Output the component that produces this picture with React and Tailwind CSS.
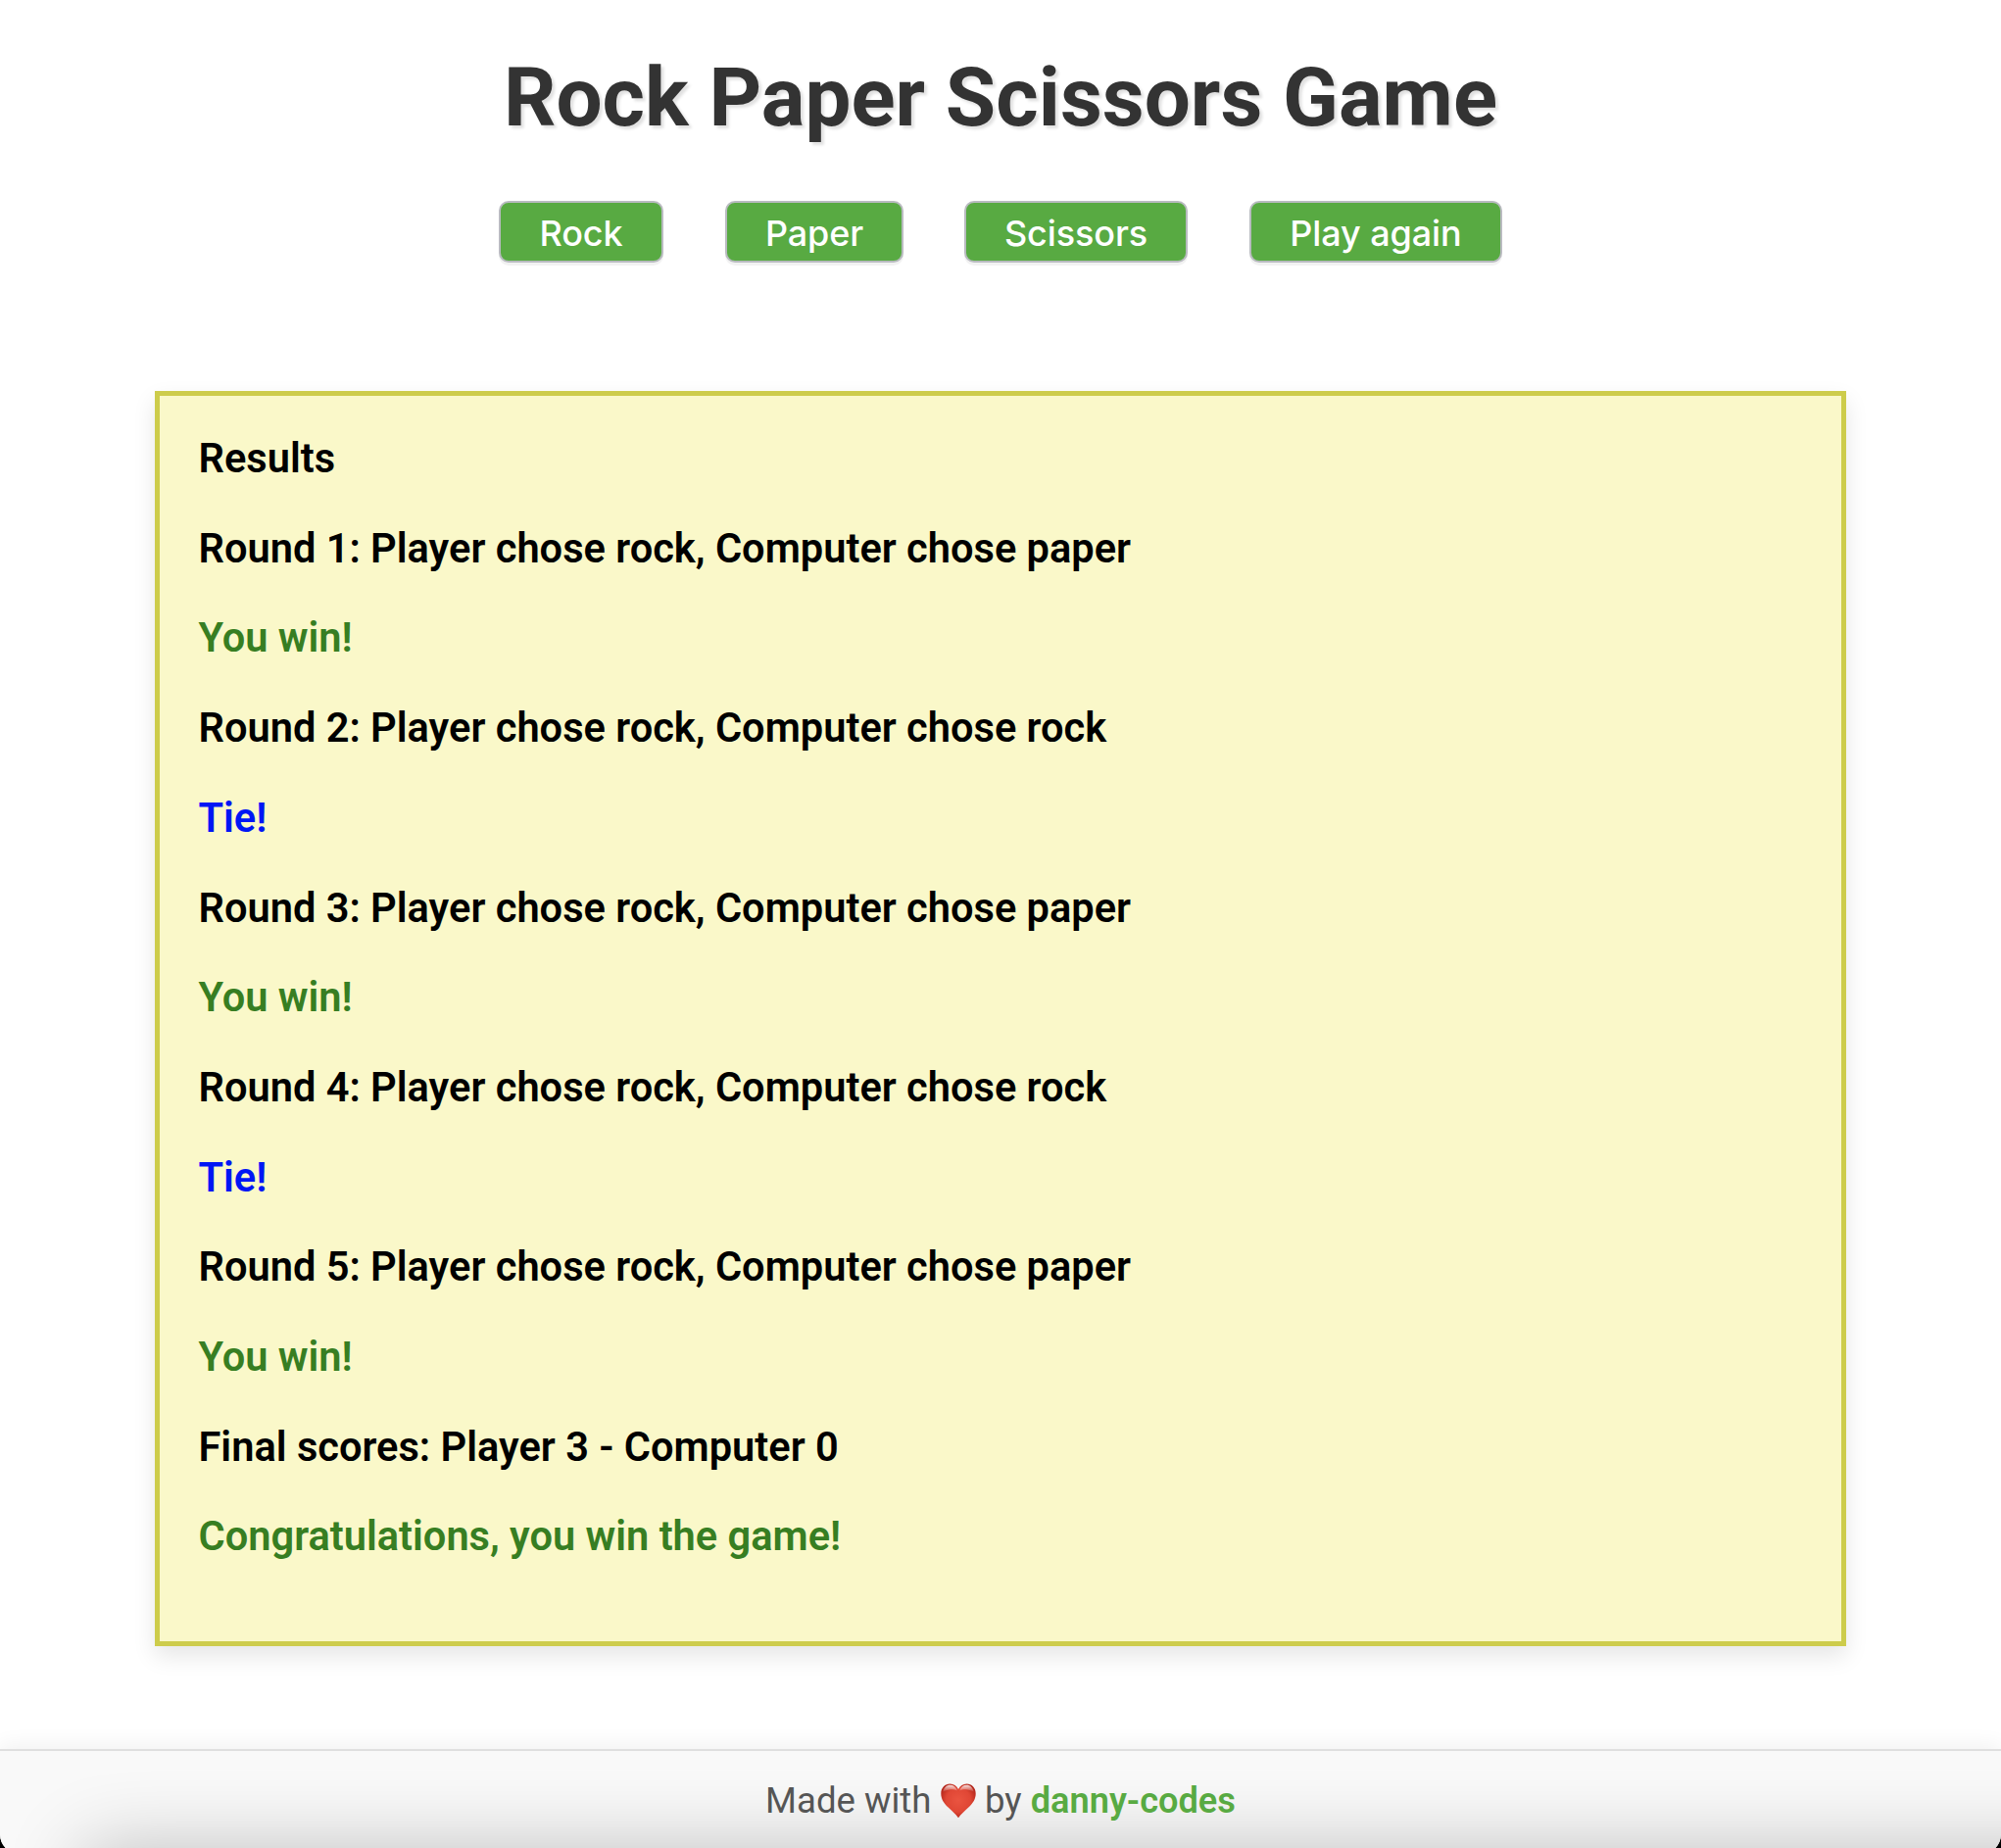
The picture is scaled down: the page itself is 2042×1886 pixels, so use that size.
import React from "react";

const choices = [
  { label: "Rock", box: "w-[168px] mr-[63px]" },
  { label: "Paper", box: "w-[182px] mr-[62px]" },
  { label: "Scissors", box: "w-[228px] mr-[63px]" },
  { label: "Play again", box: "w-[258px]" },
];

const lines = [
  { text: "Results", tone: "text-black" },
  { text: "Round 1: Player chose rock, Computer chose paper", tone: "text-black" },
  { text: "You win!", tone: "text-[#377e22]" },
  { text: "Round 2: Player chose rock, Computer chose rock", tone: "text-black" },
  { text: "Tie!", tone: "text-[#0016f5]" },
  { text: "Round 3: Player chose rock, Computer chose paper", tone: "text-black" },
  { text: "You win!", tone: "text-[#377e22]" },
  { text: "Round 4: Player chose rock, Computer chose rock", tone: "text-black" },
  { text: "Tie!", tone: "text-[#0016f5]" },
  { text: "Round 5: Player chose rock, Computer chose paper", tone: "text-black" },
  { text: "You win!", tone: "text-[#377e22]" },
  { text: "Final scores: Player 3 - Computer 0", tone: "text-black" },
  { text: "Congratulations, you win the game!", tone: "text-[#377e22]" },
];

function Heart() {
  return (
    <svg className="mt-[4px] mr-[9px] ml-[9.5px] h-[36px] w-[36px] shrink-0" viewBox="0 0 36 36">
      <defs>
        <radialGradient id="heartFill" cx="0.5" cy="0.48" r="0.58">
          <stop offset="0" stopColor="#ea5440" />
          <stop offset="0.6" stopColor="#e04735" />
          <stop offset="1" stopColor="#b02318" />
        </radialGradient>
        <linearGradient id="heartGloss" x1="0" y1="0" x2="0" y2="1">
          <stop offset="0" stopColor="#fff" stopOpacity="0.85" />
          <stop offset="1" stopColor="#fff" stopOpacity="0" />
        </linearGradient>
      </defs>
      <path
        d="M18 35.2C15.5 31.6 11.6 28.6 7.6 24.6C3 20 0.3 15.8 0.3 10.4C0.3 4.6 4.4 0.6 9.5 0.6C13.3 0.6 16.4 2.7 18 6C19.6 2.7 22.7 0.6 26.5 0.6C31.6 0.6 35.7 4.6 35.7 10.4C35.7 15.8 33 20 28.4 24.6C24.4 28.6 20.5 31.6 18 35.2Z"
        fill="url(#heartFill)"
      />
      <path d="M2.2 9C3 4.4 6 1.8 9.6 1.8C13 1.8 15.6 3.8 16.8 7.4C13 5.6 6.5 5.6 2.2 9Z" fill="url(#heartGloss)" />
      <path d="M33.8 9C33 4.4 30 1.8 26.4 1.8C23 1.8 20.4 3.8 19.2 7.4C23 5.6 29.5 5.6 33.8 9Z" fill="url(#heartGloss)" />
    </svg>
  );
}

export default function App() {
  return (
    <div className="h-[1886px] w-[2042px] overflow-hidden bg-black">
      <div className="flex h-[1892px] flex-col overflow-hidden rounded-b-[20px] bg-white font-['Roboto',sans-serif]">
        <h1 className="mt-[50px] text-center text-[83.5px] leading-[99px] font-bold text-[#333] [text-shadow:3px_3px_3px_rgba(0,0,0,0.12)]">
          Rock Paper Scissors Game
        </h1>

        <div className="mt-[56px] flex justify-center">
          {choices.map((c) => (
            <button
              key={c.label}
              className={`${c.box} h-[63px] rounded-[10px] border-2 border-[#b9bbc0] bg-[#58aa42] pt-[3px] font-['Inter',sans-serif] text-[36px] leading-[56px] font-medium tracking-[-0.1px] text-white shadow-[0_3px_0_rgba(0,0,0,0.05)]`}
            >
              {c.label}
            </button>
          ))}
        </div>

        <section className="mx-[158px] mt-[131px] h-[1281px] border-5 border-[#cdcc4b] bg-[#faf8c9] pt-[18px] pl-[39.5px] shadow-[0_10px_22px_rgba(0,0,0,0.1)]">
          {lines.map((l, i) => (
            <p key={i} className={`${l.tone} text-[41.6px] leading-[91.7px] font-semibold`}>
              {l.text}
            </p>
          ))}
        </section>

        <footer className="relative mt-[105px] flex flex-1 justify-center border-t-2 border-[#dfdfdf] bg-[#f9f9f9] pt-[29px] text-[36.6px] leading-[44px] text-[#555] shadow-[0_-4px_20px_rgba(0,0,0,0.06)]">
          <div className="pointer-events-none absolute inset-0 overflow-hidden">
            <div className="absolute top-[100px] right-[-200px] left-[85px] h-[200px] shadow-[0_0_80px_rgba(0,0,0,0.24)]" />
          </div>
          <div className="relative flex">
            <span>Made with</span>
            <Heart />
            <span>by</span>
            <a className="ml-[9px] text-[36.2px] font-semibold text-[#58aa42]">danny-codes</a>
          </div>
        </footer>
      </div>
    </div>
  );
}
